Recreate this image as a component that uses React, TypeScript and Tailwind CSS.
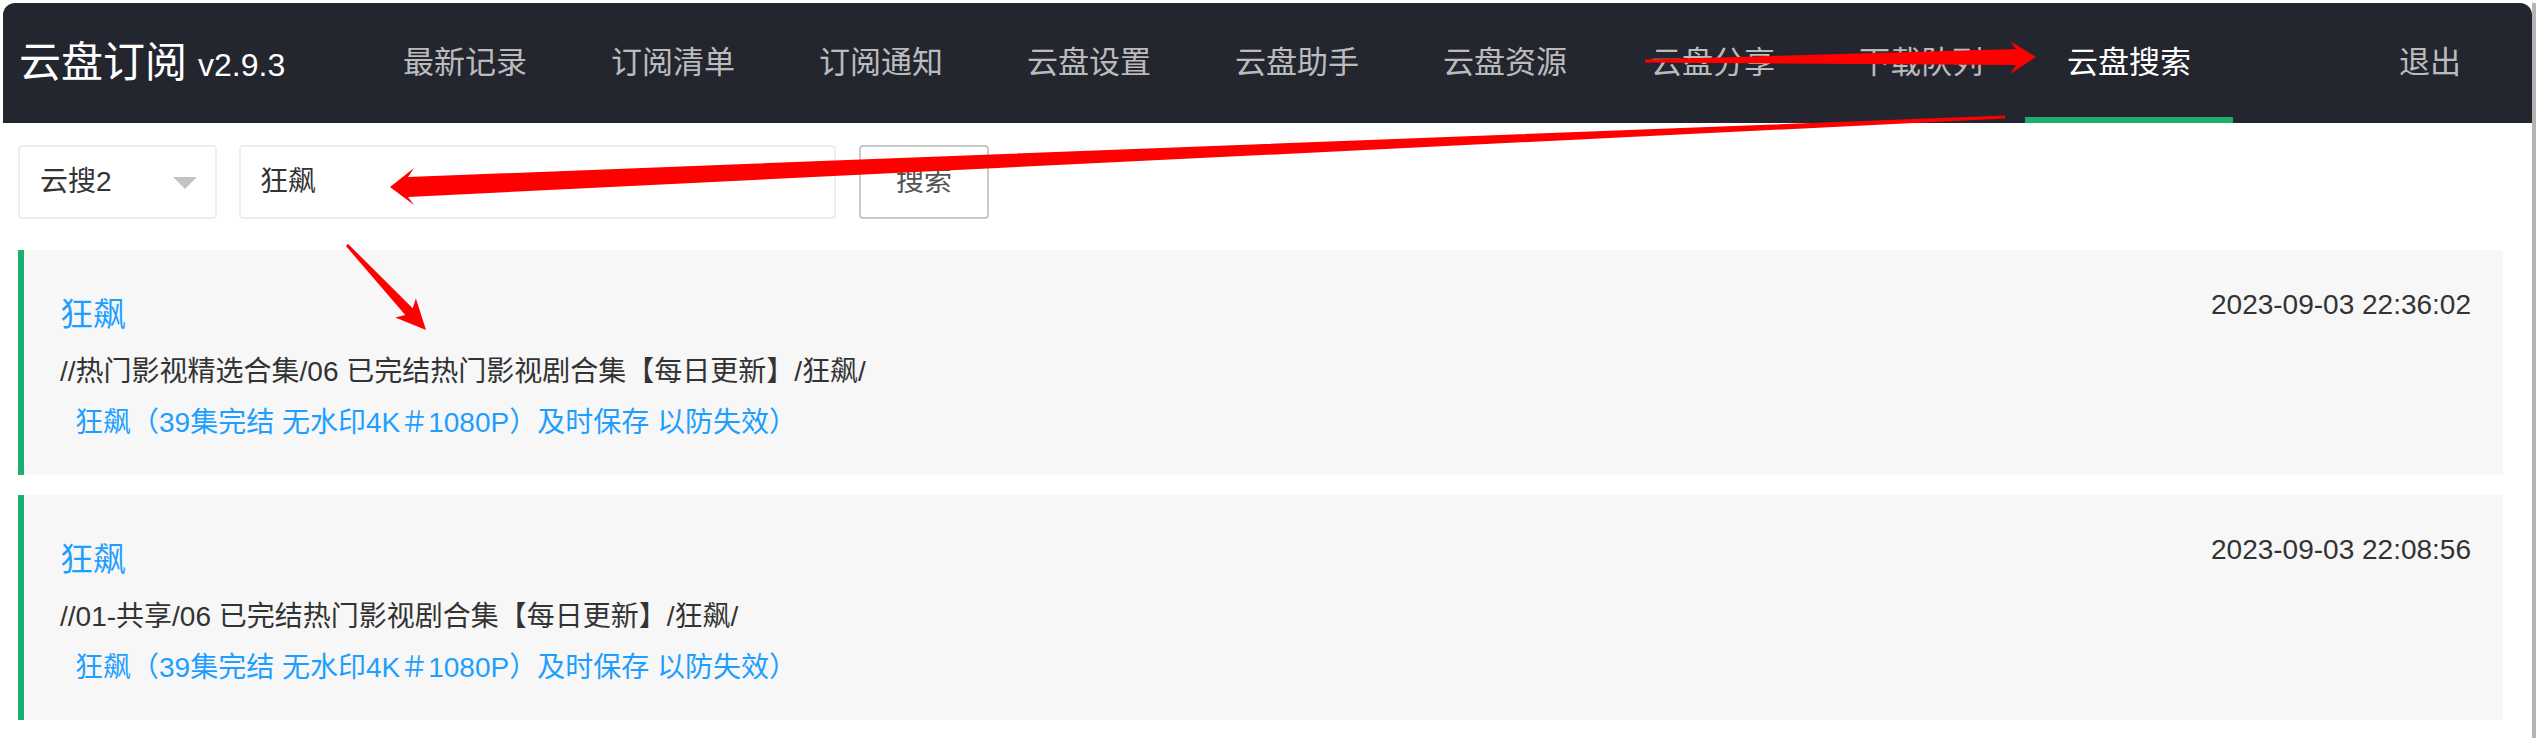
import React from "react";

const navItems = [
  "最新记录",
  "订阅清单",
  "订阅通知",
  "云盘设置",
  "云盘助手",
  "云盘资源",
  "云盘分享",
  "下载队列",
  "云盘搜索",
];

interface Result {
  title: string;
  path: string;
  name: string;
  time: string;
}

const results: Result[] = [
  {
    title: "狂飙",
    path: "//热门影视精选合集/06 已完结热门影视剧合集【每日更新】/狂飙/",
    name: "狂飙（39集完结 无水印4K＃1080P）及时保存 以防失效）",
    time: "2023-09-03 22:36:02",
  },
  {
    title: "狂飙",
    path: "//01-共享/06 已完结热门影视剧合集【每日更新】/狂飙/",
    name: "狂飙（39集完结 无水印4K＃1080P）及时保存 以防失效）",
    time: "2023-09-03 22:08:56",
  },
];

function Header() {
  return (
    <div className="ml-[3px] mt-[3px] h-[120px] bg-[#23262e] rounded-t-[12px] flex items-stretch pl-[16px] pr-[29px]">
      <div className="w-[342px] flex items-center text-white">
        <span className="text-[42px] leading-none">云盘订阅</span>
        <span className="text-[32px] leading-none ml-[11px] mt-[4px]">v2.9.3</span>
      </div>
      <ul className="flex items-stretch">
        {navItems.map((item) => {
          const active = item === "云盘搜索";
          return (
            <li
              key={item}
              className={`relative flex items-center px-[42px] text-[31px] ${
                active ? "text-white" : "text-white/70"
              }`}
            >
              {item}
              {active && (
                <span className="absolute left-0 right-0 bottom-0 h-[6px] bg-[#1cb06e]" />
              )}
            </li>
          );
        })}
      </ul>
      <div className="ml-auto flex items-center px-[42px] text-[31px] text-white/70">退出</div>
    </div>
  );
}

function SearchBar() {
  return (
    <div className="flex items-center h-[74px] mt-[22px]">
      <div className="w-[199px] h-full border-2 border-[#eeeeee] rounded-[4px] bg-white flex items-center pl-[20px] pr-[18px] text-[28px] text-[#333]">
        <span>云搜2</span>
        <span className="ml-auto mt-[2px] w-0 h-0 border-l-[12px] border-r-[12px] border-t-[12px] border-l-transparent border-r-transparent border-t-[#c2c2c2]" />
      </div>
      <div className="w-[597px] h-full ml-[22px] border-2 border-[#eeeeee] rounded-[4px] bg-white flex items-center pl-[19px] text-[28px] text-[#333]">
        狂飙
      </div>
      <button className="w-[130px] h-full ml-[23px] border-2 border-[#c9c9c9] rounded-[4px] bg-white text-[28px] text-[#555]">
        搜索
      </button>
    </div>
  );
}

function ResultCard({ r, first }: { r: Result; first: boolean }) {
  return (
    <div
      className={`border-l-[6px] border-[#1cb06e] bg-[#f7f7f7] pl-[36px] pr-[32px] pt-[40px] pb-[32px] ${
        first ? "mt-[31px]" : "mt-[20px]"
      }`}
    >
      <div className="flex justify-between items-start">
        <div className="text-[33px] leading-[50px] text-[#1e9fff]">{r.title}</div>
        <div className="text-[28px] leading-[30px] text-[#333]">{r.time}</div>
      </div>
      <div className="text-[28px] leading-[40px] mt-[12px] text-[#333]">{r.path}</div>
      <div className="text-[28px] leading-[40px] mt-[11px] ml-[15px] text-[#1e9fff]">{r.name}</div>
    </div>
  );
}

function Arrows() {
  return (
    <svg
      className="absolute left-0 top-0 pointer-events-none"
      width="2540"
      height="738"
      viewBox="0 0 2540 738"
    >
      <polygon
        fill="#ff0000"
        points="1645,59.5 2016,49 2010,41 2036,57 2010,74 2016,65 1645,62.5"
      />
      <polygon
        fill="#ff0000"
        points="2005,115.5 408,177 414,168 390,187 414,205 408,197 2005,118.5"
      />
      <polygon
        fill="#ff0000"
        points="348.1,244 412.7,308.3 415.9,298.5 426,330 395.3,317.5 405.3,315.1 345.9,246"
      />
    </svg>
  );
}

export default function App() {
  return (
    <div className="relative w-[2540px] h-[738px] bg-white overflow-hidden font-['Liberation_Sans','Noto_Sans_CJK_SC',sans-serif]">
      <div className="w-[2536px] h-full border-r-4 border-[#b4b4b4]">
        <Header />
        <div className="pl-[18px] pr-[29px]">
          <SearchBar />
          {results.map((r, i) => (
            <ResultCard key={i} r={r} first={i === 0} />
          ))}
        </div>
      </div>
      <Arrows />
    </div>
  );
}
